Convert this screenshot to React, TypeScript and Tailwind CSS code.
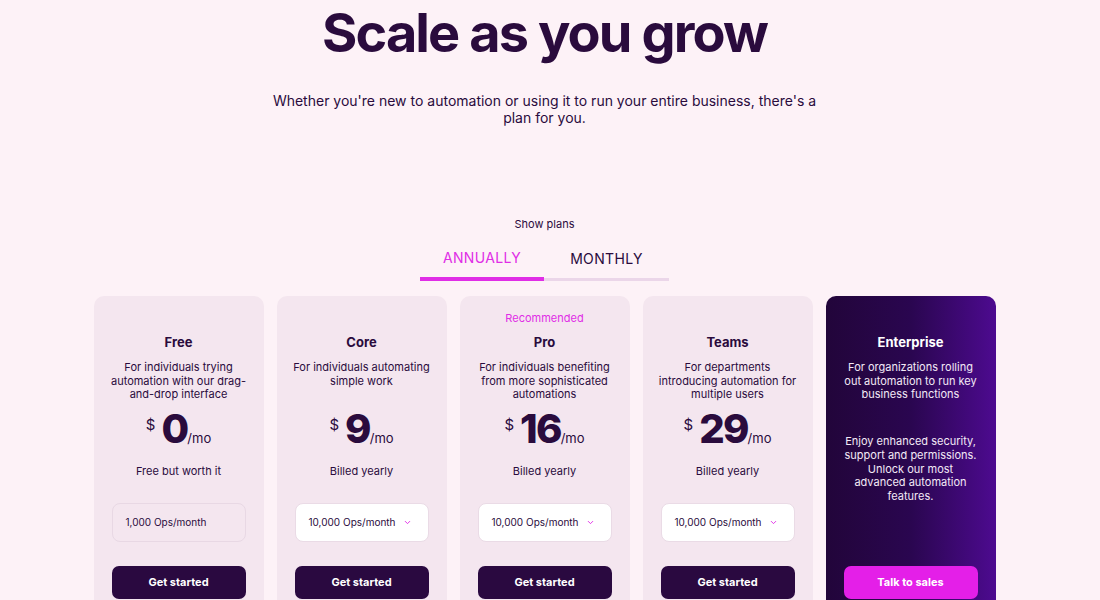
import { ChevronDown } from 'lucide-react';

type Plan = {
  name: string;
  desc: string;
  price?: string;
  note?: string;
  ops?: string;
  recommended?: boolean;
  dropdown?: boolean;
};

const plans: Plan[] = [
  {
    name: 'Free',
    desc: 'For individuals trying automation with our drag-and-drop interface',
    price: '0',
    note: 'Free but worth it',
    ops: '1,000 Ops/month',
  },
  {
    name: 'Core',
    desc: 'For individuals automating simple work',
    price: '9',
    note: 'Billed yearly',
    ops: '10,000 Ops/month',
    dropdown: true,
  },
  {
    name: 'Pro',
    desc: 'For individuals benefiting from more sophisticated automations',
    price: '16',
    note: 'Billed yearly',
    ops: '10,000 Ops/month',
    recommended: true,
    dropdown: true,
  },
  {
    name: 'Teams',
    desc: 'For departments introducing automation for multiple users',
    price: '29',
    note: 'Billed yearly',
    ops: '10,000 Ops/month',
    dropdown: true,
  },
];

function PlanCard({ plan }: { plan: Plan }) {
  return (
    <div className="h-[320px] rounded-[10px] bg-[#f4e6ef] px-[18px] pt-[15px] pb-[17px] flex flex-col items-center text-[#2a0b3d]">
      {/* Recommended slot keeps titles aligned */}
      <div className="h-[14px] text-[11px] leading-[14px] text-[#e02de6]">
        {plan.recommended ? 'Recommended' : ''}
      </div>
      <h3 className="mt-[8px] text-[13px] leading-[18px] font-bold">{plan.name}</h3>
      <p className="mt-[10px] h-[41px] -mx-[4px] text-center text-[11px] leading-[13.5px]">{plan.desc}</p>

      {/* Price */}
      <div className="mt-[6px] h-[42px] flex items-end">
        <span className="self-start mt-[8px] mr-[6px] text-[15px] leading-[18px]">$</span>
        <span className="text-[40px] leading-[42px] font-extrabold tracking-[-0.045em]">{plan.price}</span>
        <span className="mb-[4px] text-[13px] leading-[16px]">/mo</span>
      </div>

      <div className="mt-[14px] text-[11px] leading-[14px]">{plan.note}</div>

      {/* Ops select */}
      <div
        className={`mt-[25px] h-[39px] w-full rounded-[8px] border px-[13px] flex items-center justify-between text-[10px] whitespace-nowrap ${
          plan.dropdown ? 'bg-white border-[#eadbe6]' : 'bg-[#f4e6ef] border-[#e8d8e4]'
        }`}
      >
        <span>{plan.ops}</span>
        {plan.dropdown && (
          <ChevronDown className="shrink-0 w-[9px] h-[9px] mr-[3px] text-[#e02de6]" strokeWidth={2.5} />
        )}
      </div>

      <button className="mt-auto h-[33px] w-full rounded-[7px] bg-[#2a0940] text-white text-[11px] font-bold">
        Get started
      </button>
    </div>
  );
}

function EnterpriseCard() {
  return (
    <div className="h-[320px] rounded-[10px] bg-gradient-to-r from-[#22053a] via-[#2a0650] to-[#4d0a90] px-[18px] pt-[15px] pb-[17px] flex flex-col items-center text-white">
      <div className="h-[14px]" />
      <h3 className="mt-[8px] text-[13px] leading-[18px] font-bold">Enterprise</h3>
      <p className="mt-[10px] h-[41px] -mx-[4px] text-center text-[11px] leading-[13.5px] text-[#f3e9f6]">
        For organizations rolling out automation to run key business functions
      </p>
      <p className="mt-[33px] -mx-[2px] text-center text-[11px] leading-[13.75px] text-[#f3e9f6]">
        Enjoy enhanced security, support and permissions. Unlock our most advanced automation features.
      </p>
      <button className="mt-auto h-[33px] w-full rounded-[7px] bg-[#e41fe8] text-white text-[11px] font-bold">
        Talk to sales
      </button>
    </div>
  );
}

export default function App() {
  return (
    <div
      className="h-[600px] overflow-hidden bg-[#fdf2f7] pr-[11px] flex flex-col items-center text-[#2a0b3d]"
      style={{ fontFamily: 'Inter, "Noto Sans", sans-serif' }}
    >
      <h1 className="pt-[6px] text-[54px] leading-[54px] font-bold tracking-[-0.035em]">Scale as you grow</h1>
      <p className="mt-[32px] max-w-[560px] text-center text-[14px] leading-[17px]">
        Whether you're new to automation or using it to run your entire business, there's a plan for you.
      </p>

      <div className="mt-[91px] text-[11px] leading-[14px]">Show plans</div>

      {/* Billing tabs */}
      <div className="mt-[17px] flex items-end">
        <div className="w-[124px] flex flex-col items-center">
          <span className="text-[14px] leading-[20px] tracking-wide text-[#e02de6]">ANNUALLY</span>
          <div className="mt-[9px] h-[4px] w-full bg-[#e02de6]" />
        </div>
        <div className="w-[125px] flex flex-col items-center">
          <span className="text-[14px] leading-[20px] tracking-wide">MONTHLY</span>
          <div className="mt-[9px] mb-[0.5px] h-[3px] w-full bg-[#ebd6e9]" />
        </div>
      </div>

      {/* Plans */}
      <div className="mt-[15px] w-[902px] grid grid-cols-5 gap-[13px]">
        {plans.map(p => (
          <PlanCard key={p.name} plan={p} />
        ))}
        <EnterpriseCard />
      </div>
    </div>
  );
}
